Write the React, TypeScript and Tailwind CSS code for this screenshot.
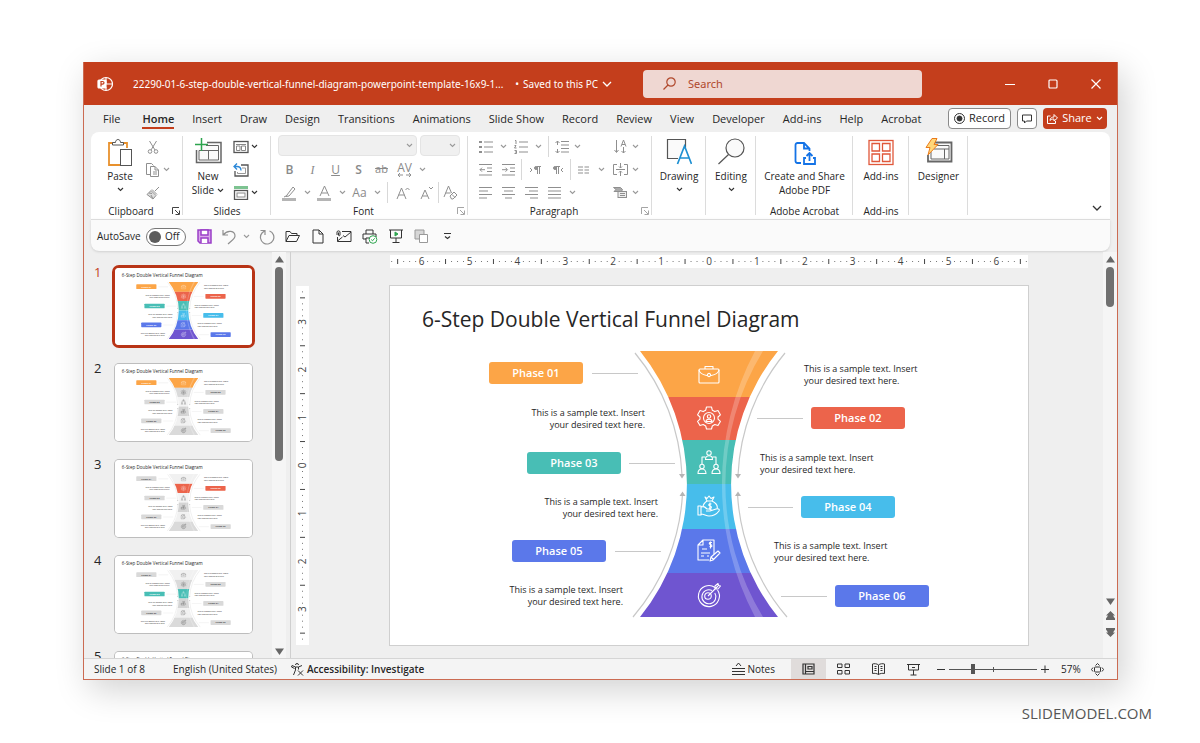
import React, { useId, useState } from 'react';

const TABS = [
    'File', 'Home', 'Insert', 'Draw', 'Design', 'Transitions', 'Animations', 'Slide Show',
    'Record', 'Review', 'View', 'Developer', 'Add-ins', 'Help', 'Acrobat',
];

const COLORS = ['#fca547', '#ec644b', '#48beb5', '#47bdeb', '#5b78ea', '#6f55d0'];
const GREYS = ['#f1f1f1', '#dadada', '#f4f4f4', '#d4d4d4', '#f1f1f1', '#dadada'];

// Diagram geometry, in slide units (638 x 359)
const BANDS = [
    { y: 65, h: 46 },
    { y: 111, h: 43 },
    { y: 154, h: 44 },
    { y: 198, h: 45 },
    { y: 243, h: 44 },
    { y: 287, h: 44 },
];

const PHASES = [
    { label: 'Phase 01', x: 99, y: 76, line: [202, 248], tx: 414, ty: 86, end: false, color: '#fca547' },
    { label: 'Phase 02', x: 421, y: 121, line: [367, 413], tx: 255, ty: 130, end: true, color: '#ec644b' },
    { label: 'Phase 03', x: 137, y: 166, line: [239, 285], tx: 370, ty: 175, end: false, color: '#48beb5' },
    { label: 'Phase 04', x: 411, y: 210, line: [358, 403], tx: 268, ty: 219, end: true, color: '#47bdeb' },
    { label: 'Phase 05', x: 122, y: 254, line: [225, 271], tx: 384, ty: 263, end: false, color: '#5b78ea' },
    { label: 'Phase 06', x: 445, y: 299, line: [391, 437], tx: 233, ty: 307, end: true, color: '#5b78ea' },
];

const PHASE_ICONS = [
    <g key="case">
        <rect x="-10" y="-6" width="20" height="14" rx="1" />
        <path d="M-4 -6v-2.500h8V-6M-10 -5C-9 -.5 -5 0 -2 .5M10 -5C9 -.5 5 0 2 .5" />
        <circle cx="0" cy="0" r="1.600" />
    </g>,
    <g key="gear">
        <path d="M-2.500 -11h5l.8 3.200 2.500 1.400 3.200 -1 2.400 4.200 -2.400 2.200v2.200l2.400 2.200 -2.400 4.200 -3.200 -1 -2.500 1.400 -.8 3h-5l-.8 -3 -2.500 -1.400 -3.200 1 -2.400 -4.200 2.400 -2.200v-2.200l-2.400 -2.200 2.400 -4.200 3.200 1 2.500 -1.400z" />
        <circle cx="0" cy="0" r="5.500" />
        <circle cx="0" cy="-1.500" r="1.700" />
        <path d="M-3 3.500C-3 .5 3 .5 3 3.500z" />
    </g>,
    <g key="team">
        <circle cx="0" cy="-9" r="2.200" />
        <path d="M-3.500 -2.500c0 -5 7 -5 7 0zM-3.500 -5H-7V2M3.500 -5H7V2" />
        <circle cx="-7" cy="4.500" r="2.200" />
        <circle cx="7" cy="4.500" r="2.200" />
        <path d="M-11 11.500c0 -6 8 -6 8 0zM3 11.500c0 -6 8 -6 8 0z" />
    </g>,
    <g key="money">
        <path d="M-11 -1h3v9h-3zM-8 0c3 -1 4 0 6 2h3c1.500 0 1.500 2 0 2h-4M1 4l6 -2c2 -.5 4 0 3 2C7 8 4 9 0 9c-3 0 -5 -2 -8 -2M-4 -10l2 1.500L0 -11l2 2.500L5 -10 3 -6h-5zM-2 -6c-3 2 -4 4 -4 6M3 -6c4 2 6 5 5 8" />
        <path d="M2.500 -3c-3 -1 -3.500 1.500 -1.500 2s2 3 -1 2M1 -4.500v7.500" />
    </g>,
    <g key="doc">
        <path d="M5 3V-11H-6l-5 5V9H0M-6 -11v5h-5M-7 -2h5M-8 2h9M-8 5h3M-2 5h2" />
        <path d="M1 10l1 -4 7 -6 2 2 -7 7zM2.500 6.500l2 2" />
        <path d="M3 -8.500c-3 -1 -3.500 1.500 -1.500 2s2 3 -1 2M1.500 -9.500v7" />
    </g>,
    <g key="target">
        <path d="M6 -7.500A10.500 10.500 0 1 0 8.500 -5" />
        <path d="M3 -4.500A7 7 0 1 0 5.800 -2" />
        <circle cx="-1" cy="1" r="3.300" />
        <path d="M-1 1L9 -9M6 -6l0 -3 3 -2.500 .5 2 2 .5 -2.500 3z" />
    </g>,
];

const ICON_Y = [89, 132, 176, 221, 265, 309];

const SlideArt = ({ active }: { active?: number }) => {
    const id = useId();
    const lit = (i: number) => active === undefined || active === i;

    return (
        <svg viewBox="0 0 638 359" className="block w-full bg-white" role="img" aria-label="6-Step Double Vertical Funnel Diagram">
            <text x="32" y="41" fontSize="21" fill="#262626">6-Step Double Vertical Funnel Diagram</text>
            <clipPath id={id}>
                <path d="M250 65A212 212 0 0 1 250 331H388A212 212 0 0 1 388 65z" />
            </clipPath>
            <g clipPath={`url(#${id})`}>
                {BANDS.map((b, i) => (
                    <rect key={i} x="240" y={b.y} width="160" height={b.h} fill={lit(i) ? COLORS[i] : GREYS[i]} />
                ))}
                <path d="M365 65A284 284 0 0 0 365 331H373A254 254 0 0 1 373 65z" fill="#fff" fillOpacity=".22" />
            </g>
            <g fill="none" stroke="#c8c8c8" strokeWidth="1.200">
                <path d="M245 67A206 206 0 0 1 292 189M243 331A206 206 0 0 0 292.500 208" />
                <path d="M395 67A206 206 0 0 0 348 189M397 331A206 206 0 0 1 347.500 208" />
            </g>
            <path d="M289 188h6l-3 4.500zM345 188h6l-3 4.500zM289.500 210h6l-3 -4.500zM345 210h6l-3 -4.500z" fill="#b5b5b5" />
            {PHASES.map((p, i) => (
                <g key={p.label}>
                    <rect x={p.x} y={p.y} width="94" height="22" rx="3" fill={lit(i) ? p.color : '#d9d9d9'} />
                    <text x={p.x + 47} y={p.y + 15} fontSize="11" fontWeight="600" textAnchor="middle" fill={lit(i) ? '#fff' : '#333'}>
                        {p.label}
                    </text>
                    <path d={`M${p.line[0]} ${p.y + 11.5}H${p.line[1]}`} stroke="#c8c8c8" />
                    <text x={p.tx} y={p.ty} fontSize="9" textAnchor={p.end ? 'end' : 'start'} fill="#262626">
                        This is a sample text. Insert
                    </text>
                    <text x={p.tx} y={p.ty + 12} fontSize="9" textAnchor={p.end ? 'end' : 'start'} fill="#262626">
                        your desired text here.
                    </text>
                    <g transform={`translate(319 ${ICON_Y[i]})`} fill="none" stroke={lit(i) ? '#fff' : '#555'} strokeWidth="1.100" strokeLinejoin="round">
                        {PHASE_ICONS[i]}
                    </g>
                </g>
            ))}
        </svg>
    );
};

const Ico = ({ w = 16, h = 16, color = '#8f8f8f', sw = 1, children }: {
    w?: number; h?: number; color?: string; sw?: number; children: React.ReactNode;
}) => (
    <svg width={w} height={h} viewBox={`0 0 ${w} ${h}`} fill="none" stroke={color} strokeWidth={sw} className="shrink-0" aria-hidden="true">
        {children}
    </svg>
);

const Chev = ({ color = '#9a9a9a' }: { color?: string }) => (
    <Ico w={7} h={5} color={color} sw={1.1}><path d="M1 1l2.500 2.500L6 1" /></Ico>
);

const Tool = ({ label, className = 'w-[23px]', children }: { label: string; className?: string; children: React.ReactNode }) => (
    <button type="button" aria-label={label} className={`flex h-[23px] shrink-0 items-center justify-center ${className}`}>
        {children}
    </button>
);

const Drop = ({ label, dark = false }: { label: string; dark?: boolean }) => (
    <Tool label={label} className="w-3"><Chev color={dark ? '#333' : '#9a9a9a'} /></Tool>
);

const Sep = ({ className = 'mx-px' }: { className?: string }) => <span className={`h-[21px] w-px bg-[#d8d8d8] ${className}`} />;

const Launcher = ({ dark = false }: { dark?: boolean }) => (
    <button type="button" aria-label="More options" className="absolute right-[3px] bottom-1">
        <Ico w={8} h={8} color={dark ? '#444' : '#a5a5a5'}><path d="M.5 7V.5H7M3 3l4 4M7.500 3.500v4h-4" /></Ico>
    </button>
);

const Group = ({ label, className, launcher, children }: {
    label: string; className: string; launcher?: 'dark' | 'light'; children: React.ReactNode;
}) => (
    <section aria-label={label || undefined} className={`relative flex shrink-0 flex-col pt-[3px] pb-px ${className}`}>
        <div className="flex h-[69px]">{children}</div>
        <div className={launcher ? 'h-[14px] pr-3 text-center leading-[14px]' : 'h-[14px] text-center leading-[14px]'}>{label}</div>
        {launcher && <Launcher dark={launcher === 'dark'} />}
        <span className="absolute right-0 top-1 bottom-1 w-px bg-[#dcdcdc]" />
    </section>
);

const BigButton = ({ icon, lines, chevron }: { icon: React.ReactNode; lines: string[]; chevron?: boolean }) => (
    <button type="button" className="flex w-full flex-col items-center pt-[3px] leading-[14px]">
        <span className="flex h-[31px] items-start justify-center">{icon}</span>
        {lines.map((l) => <span key={l} className="whitespace-nowrap">{l}</span>)}
        {chevron && <span className="flex h-3 items-center"><Chev color="#333" /></span>}
    </button>
);

const AlignIcon = ({ rows }: { rows: [number, number][] }) => (
    <Ico w={13} h={14}>
        {rows.map(([a, b], i) => <path key={i} d={`M${a} ${1.5 + i * 3.5}H${b}`} />)}
    </Ico>
);

const SlideGlyph = ({ children }: { children?: React.ReactNode }) => (
    <Ico w={16} h={14} color="#555">{children}</Ico>
);

const Ribbon = () => (
    <div className="flex h-[87px] overflow-hidden rounded-t-lg bg-white">
        <Group label="Clipboard" className="w-[92px]" launcher="dark">
            <div className="w-[54px] pl-1">
                <BigButton
                    lines={['Paste']}
                    chevron
                    icon={
                        <Ico w={26} h={29} color="#555">
                            <path d="M8 5H2v22h11" stroke="#e8912d" strokeWidth="1.800" />
                            <path d="M15 5h5v5" stroke="#e8912d" strokeWidth="1.800" />
                            <path d="M5.500 7V4.500h3c0-4 5-4 5 0h3V7z" fill="#fff" />
                            <rect x="13.500" y="11.500" width="11" height="16" fill="#fff" />
                        </Ico>
                    }
                />
            </div>
            <div>
                <Tool label="Cut" className="w-[15px]">
                    <Ico w={12} h={14}><path d="M2.500 1l5.500 9M9.500 1L4 10" /><circle cx="3" cy="11.500" r="1.800" /><circle cx="9" cy="11.500" r="1.800" /></Ico>
                </Tool>
                <div className="flex">
                    <Tool label="Copy" className="w-[15px]">
                        <Ico w={15} h={15}><path d="M5 12.500H1.500V1.500h5l2 2M5.500 4.500H10l3.500 3.500v6.500h-8zM10 4.500V8h3.500M8 10h4M8 12h4" /></Ico>
                    </Tool>
                    <Drop label="Copy options" />
                </div>
                <Tool label="Format painter" className="w-[15px]">
                    <Ico w={14} h={14}><path d="M13 1L9 5M6 3.500l5 5M5 4.500l5 5L7 13 1 8.500zM3 7l3 .5M5 9l1.500 3" fill="#ddd" /></Ico>
                </Tool>
            </div>
        </Group>

        <Group label="Slides" className="w-[88px]">
            <div className="w-[50px]">
                <button type="button" className="flex w-full flex-col items-center pt-[3px] leading-[14px]">
                    <span className="h-[31px]">
                        <Ico w={28} h={26} color="#666">
                            <path d="M13 4.500h14v20H2.500V12" fill="#fafafa" strokeWidth="1.500" />
                            <path d="M12 7.500h12.500v14.500H5V12.500h19.500M14.500 12.500v9" />
                            <path d="M7.500 0v13M1 6.500h13" stroke="#2da44e" strokeWidth="1.500" />
                        </Ico>
                    </span>
                    <span>New</span>
                    <span className="flex items-center gap-[3px]"><span>Slide</span><Chev color="#333" /></span>
                </button>
            </div>
            <div>
                <div className="flex">
                    <Tool label="Layout" className="w-[15px]">
                        <SlideGlyph><rect x="1" y="1.500" width="14" height="11" strokeWidth="1.300" /><path d="M3 4.500h10M3.500 6h3.500v4.500H3.500zM8.500 6H12.500v4.500H8.500z" stroke="#888" /></SlideGlyph>
                    </Tool>
                    <Drop label="Layout options" dark />
                </div>
                <Tool label="Reset" className="w-[15px]">
                    <SlideGlyph><path d="M8 2h7v11H2V8" strokeWidth="1.300" /><path d="M9 5h3.500v5.500H4.500V9" stroke="#999" /><path d="M4 .5L1 3.500l3 3M1 3.500h3c3 0 4 1.500 4 4" stroke="#2b88d8" strokeWidth="1.300" /></SlideGlyph>
                </Tool>
                <div className="flex">
                    <Tool label="Section" className="w-[15px]">
                        <SlideGlyph><path d="M1 1.500h14" stroke="#7dc391" strokeWidth="3" /><rect x="1.500" y="4.500" width="13" height="9" strokeWidth="1.300" /><rect x="4" y="7" width="8" height="4" stroke="#888" /></SlideGlyph>
                    </Tool>
                    <Drop label="Section options" dark />
                </div>
            </div>
        </Group>

        <Group label="Font" className="w-[197px]" launcher="light">
            <div className="flex flex-col pl-[7px] text-[#8a8a8a]">
                <div className="flex h-[23px] gap-[3px]">
                    <span className="relative block">
                        <select aria-label="Font name" className="block h-[21px] w-[139px] appearance-none rounded border border-[#e4e4e4] bg-[#f0f0f0]" />
                        <span className="pointer-events-none absolute right-1 top-2"><Chev /></span>
                    </span>
                    <span className="relative block">
                        <select aria-label="Font size" className="block h-[21px] w-[40px] appearance-none rounded border border-[#e4e4e4] bg-[#f0f0f0]" />
                        <span className="pointer-events-none absolute right-1 top-2"><Chev /></span>
                    </span>
                </div>
                <div className="flex text-xs">
                    <Tool label="Bold"><span className="font-semibold">B</span></Tool>
                    <Tool label="Italic"><i className="font-['Liberation_Serif',serif]">I</i></Tool>
                    <Tool label="Underline"><u>U</u></Tool>
                    <Tool label="Shadow"><span className="font-semibold">S</span></Tool>
                    <Tool label="Strikethrough"><s className="text-[11px]">ab</s></Tool>
                    <Tool label="Character spacing">
                        <span className="flex flex-col items-center leading-[10px]">AV<Ico w={15} h={4}><path d="M3 0L1 2l2 2M1 2h5M9 2h5M12 0l2 2-2 2" /></Ico></span>
                    </Tool>
                    <Drop label="Character spacing options" />
                </div>
                <div className="flex items-center text-xs">
                    <Tool label="Highlight">
                        <Ico w={15} h={16}><path d="M5 10L11 2l2 2-6 7-3 .5zM4 11l-2 1" /><path d="M0 14.500h14" stroke="#b5b5b5" strokeWidth="3" /></Ico>
                    </Tool>
                    <Drop label="Highlight color" />
                    <Tool label="Font color">
                        <Ico w={15} h={16}><path d="M3 11L7.500 1 12 11M4.500 8h6" /><path d="M0 14.500h14" stroke="#b5b5b5" strokeWidth="3" /></Ico>
                    </Tool>
                    <Drop label="Font colors" />
                    <Tool label="Change case">Aa</Tool>
                    <Drop label="Change case options" />
                    <Sep className="mx-1" />
                    <Tool label="Increase font size"><Ico w={15} h={14}><path d="M1 13L5.500 2 10 13M2.500 9h6M9.500 4l2-2 2 2" /></Ico></Tool>
                    <Tool label="Decrease font size"><Ico w={15} h={14}><path d="M2 13l4-9 4 9M3.500 10h5M10 1l2 2 2-2" /></Ico></Tool>
                    <Sep className="" />
                    <Tool label="Clear formatting"><Ico w={15} h={15}><path d="M1 12L5.500 1l3 7M2.500 8h5M7 11l4-4 3 3-4 4H8.500zM9 9.500l3 3" /></Ico></Tool>
                </div>
            </div>
        </Group>

        <Group label="Paragraph" className="w-[184px]" launcher="light">
            <div className="flex flex-1 justify-between pl-1.5 pr-[11px]">
                <div>
                    <div className="flex items-center">
                        <Tool label="Bullets"><Ico w={14} h={14}><path d="M0 2h3M0 7h3M0 12h3" strokeWidth="2" /><path d="M5 2h9M5 7h9M5 12h9" /></Ico></Tool>
                        <Drop label="Bullet styles" />
                        <Tool label="Numbering"><Ico w={14} h={14}><path d="M1 .5h1V4M.5 5.500H2L.5 8H2.500M.5 10.500h2v3h-2M1 12h1M5 2h9M5 7h9M5 12h9" /></Ico></Tool>
                        <Drop label="Numbering styles" />
                        <Sep className="mx-1" />
                        <Tool label="Line spacing" className="w-[18px]"><Ico w={14} h={14}><path d="M2.500 5V1M.5 3l2-2 2 2M2.500 9v4M.5 11l2 2 2-2M6 1.500h8M6 5h8M6 8.500h8M6 12h8" /></Ico></Tool>
                        <Drop label="Line spacing options" />
                    </div>
                    <div className="flex items-center">
                        <Tool label="Decrease indent"><Ico w={13} h={14}><path d="M0 1.500h13M8 5h5M8 8.500h5M0 12h13M6 6.700H1M3 4.700l-2 2 2 2" /></Ico></Tool>
                        <Tool label="Increase indent"><Ico w={13} h={14}><path d="M0 1.500h13M8 5h5M8 8.500h5M0 12h13M0 6.700h5M3.500 4.700l2 2-2 2" /></Ico></Tool>
                        <Sep />
                        <Tool label="Left to right"><Ico w={12} h={10}><path d="M1 3l2 2-2 2M8.500 9V1.500M10.500 9V1.500M12 1.500H8" /><circle cx="7" cy="3" r="1.500" fill="#8f8f8f" /></Ico></Tool>
                        <Tool label="Right to left"><Ico w={12} h={10}><path d="M11 3L9 5l2 2M4.500 9V1.500M6.500 9V1.500M8 1.500H4" /><circle cx="3" cy="3" r="1.500" fill="#8f8f8f" /></Ico></Tool>
                        <Sep />
                        <Tool label="Columns"><Ico w={11} h={8}><path d="M0 1h5M0 4h5M0 7h5M6.500 1h5M6.500 4h5M6.500 7h5" /></Ico></Tool>
                        <Drop label="Column options" />
                    </div>
                    <div className="flex items-center">
                        <Tool label="Align left"><AlignIcon rows={[[0, 13], [0, 9], [0, 13], [0, 8]]} /></Tool>
                        <Tool label="Center"><AlignIcon rows={[[0, 13], [2, 11], [0, 13], [3, 10]]} /></Tool>
                        <Tool label="Align right"><AlignIcon rows={[[0, 13], [4, 13], [0, 13], [5, 13]]} /></Tool>
                        <Tool label="Justify"><AlignIcon rows={[[0, 13], [0, 13], [0, 13], [0, 13]]} /></Tool>
                        <Drop label="Justify options" />
                    </div>
                </div>
                <div>
                    <div className="flex">
                        <Tool label="Text direction" className="w-[18px]"><Ico w={13} h={14}><path d="M2.500 0v12M.5 10l2 2.500L4.500 10M9.500 7v6M7.500 11l2 2 2-2M7 6.500L9.500 0 12 6.500M8 4.500h3" /></Ico></Tool>
                        <Drop label="Text direction options" />
                    </div>
                    <div className="flex">
                        <Tool label="Align text" className="w-[18px]"><Ico w={15} h={13}><path d="M4 1.500H.5v10H4M11 1.500h3.500v10H11M3 6.500h9M7.500 0v5M6 3.500L7.500 5 9 3.500M7.500 13V8M6 9.500L7.500 8 9 9.500" /></Ico></Tool>
                        <Drop label="Align text options" />
                    </div>
                    <div className="flex">
                        <Tool label="Convert to SmartArt" className="w-[18px]"><Ico w={15} h={13}><path d="M.5 1.500h7l2 2-1 2H1l2-2z" fill="#aaa" /><rect x="5" y="5.500" width="8.500" height="6" fill="#eee" /><path d="M7 7.500h5M7 9.500h5" /></Ico></Tool>
                        <Drop label="SmartArt options" />
                    </div>
                </div>
            </div>
        </Group>

        <Group label="" className="w-[54px]">
            <BigButton lines={['Drawing']} chevron icon={
                <Ico w={26} h={27} color="#555">
                    <path d="M12 20.500H1.500V1.500h18V10" fill="#fafafa" strokeWidth="1.200" />
                    <path d="M11.500 26L18.500 8l7 18M14 20h9" stroke="#1e90d2" strokeWidth="1.700" />
                </Ico>
            } />
        </Group>
        <Group label="" className="w-[50px]">
            <BigButton lines={['Editing']} chevron icon={
                <Ico w={27} h={27} color="#555" sw={1.200}><circle cx="17" cy="10" r="9" fill="#fafafa" /><path d="M10.500 16.500L.5 26" /></Ico>
            } />
        </Group>
        <Group label="Adobe Acrobat" className="w-[97px]">
            <BigButton lines={['Create and Share', 'Adobe PDF']} icon={
                <Ico w={22} h={29} color="#1473e6" sw={1.800}>
                    <path d="M7 25H3.500c-1.500 0-2-1-2-2V7c0-1.500 1-2 2-2H10l5.500 5.500V13M10 5v5.500h5.500" />
                    <path d="M12 20h-2v6h11v-6h-2M15.500 23v-8M12.500 18l3-3 3 3" />
                </Ico>
            } />
        </Group>
        <Group label="Add-ins" className="w-[56px]">
            <BigButton lines={['Add-ins']} icon={
                <Ico w={26} h={28} color="#e0573a" sw={1.300}>
                    <rect x="1" y="2.500" width="24" height="24" />
                    <path d="M4 5.500h7.500v7.500H4zM14.500 5.500H22v7.500h-7.500zM4 16h7.500v7.500H4zM14.500 16H22v7.500h-7.500z" />
                </Ico>
            } />
        </Group>
        <Group label="" className="w-[59px]">
            <BigButton lines={['Designer']} icon={
                <Ico w={28} h={25} color="#666">
                    <path d="M10 4.500h16.500v19H3V17" fill="#fafafa" strokeWidth="1.800" />
                    <path d="M9 11h15M19.500 11v10M6 21V14M10 7.500h14V21H6" />
                    <path d="M7 .5h5L9 6.500h4L3 17l2-7.500H1z" fill="#ffd77a" stroke="#ea7a1a" />
                </Ico>
            } />
        </Group>
        <div className="flex flex-1 items-end justify-end pr-2 pb-[7px]">
            <button type="button" aria-label="Ribbon options">
                <Ico w={10} h={7} color="#333" sw={1.300}><path d="M1 1l4 4 4-4" /></Ico>
            </button>
        </div>
    </div>
);

const QuickAccess = () => {
    const [autoSave, setAutoSave] = useState(false);

    return (
        <div className="flex h-[32px] items-center rounded-b-lg border-t border-[#dcdcdc] bg-[#fafafa] pt-0.5 pl-1.5 shadow-sm">
            <label htmlFor="autosave" className="w-[43px]">AutoSave</label>
            <span className="relative mr-[7px] ml-1.5 block h-[18px] w-10">
                <input
                    id="autosave"
                    type="checkbox"
                    role="switch"
                    checked={autoSave}
                    onChange={(e) => setAutoSave(e.target.checked)}
                    className="block h-full w-full appearance-none rounded-full border border-[#777] bg-white"
                />
                <span className="pointer-events-none absolute inset-0 flex items-center gap-1 pl-[3px]">
                    <span className="h-3 w-3 rounded-full bg-[#5c5c5c]" />
                    {autoSave ? 'On' : 'Off'}
                </span>
            </span>
            <Tool label="Save" className="w-[22px]">
                <Ico w={15} h={15} color="#9a3fc8" sw={1.500}>
                    <path d="M1 1h13v13H3l-2-2z" fill="#d9a6ea" /><path d="M4 1v5h7V1z" fill="#fff" /><path d="M4 14V9h7v5" fill="#fff" />
                </Ico>
            </Tool>
            <Tool label="Undo" className="w-[28px]"><Ico w={14} h={16}><path d="M1 1v5h5M1 6c5-6 12-4 12 1 0 3-4 5-7 8" strokeWidth="1.200" /></Ico></Tool>
            <Tool label="Undo list" className="w-1.5"><Chev /></Tool>
            <Tool label="Redo" className="ml-1 w-[27px]"><Ico w={16} h={16}><path d="M1.500 1.500h4.500v4.500M10.500 2a6.700 6.700 0 1 1-7.500 2l3-2.500" strokeWidth="1.200" /></Ico></Tool>
            <Tool label="Open" className="w-[25px]"><Ico w={15} h={13} color="#333"><path d="M1 11.500V1.500h4l1.500 2H12v2M1 11.500l3-6h10.500l-3 6z" /></Ico></Tool>
            <Tool label="New" className="w-[26px]"><Ico w={12} h={15} color="#333"><path d="M1 1h6l4 4v9H1zM7 1v4h4" /></Ico></Tool>
            <Tool label="Email" className="w-[26px]"><Ico w={16} h={13} color="#333"><path d="M6 1.500h9v10H1.500V7M15 2L9 7 7 5.500M1.500 11l5-4" /><path d="M1 5V2c0-1.500 3-1.500 3 0v3c0 1-1.500 1-1.500 0V2.500" /></Ico></Tool>
            <Tool label="Quick print" className="w-[26px]">
                <Ico w={16} h={15} color="#333"><path d="M4 5V1h7v4M4 10H1V5h13v3M4 14V9h4M4 14h3" /><circle cx="11" cy="10.500" r="3.800" fill="#fff" stroke="#2da44e" /><path d="M9.200 10.500l1.300 1.300 2.200-2.500" stroke="#2da44e" /></Ico>
            </Tool>
            <Tool label="Start slide show" className="w-[25px]"><Ico w={14} h={15} color="#333"><path d="M0 1h14M1.500 1v8h11V1M7 9v4.500M3.500 13.500h7" /><path d="M6 3l3 2-3 2z" fill="#2da44e" stroke="#2da44e" /></Ico></Tool>
            <Tool label="Duplicate" className="w-[26px]"><Ico w={15} h={15} color="#999"><path d="M1 1h9v9H1z" fill="#d6d6d6" /><path d="M5.500 5.500h8v8h-8z" fill="#fff" /></Ico></Tool>
            <Tool label="Customize toolbar" className="w-[26px]"><Ico w={7} h={7} color="#333" sw={1.200}><path d="M0 .5h7M1 3.500l2.500 2L6 3.500" /></Ico></Tool>
        </div>
    );
};

const TitleBar = () => (
    <header className="flex h-[43px] shrink-0 items-center bg-[#c43e1c] font-['Noto_Sans',sans-serif] text-white">
        <span className="mr-5 ml-[13px]">
            <Ico w={16} h={16} color="#fff" sw={1.200}>
                <circle cx="9" cy="8" r="6.500" /><path d="M9 1.500V8h6.500M9 14.500V11" /><rect x="1" y="4" width="8" height="8" rx="1" fill="#fff" />
                <path d="M4 10.500v-5h1.500c2 0 2 2.600 0 2.600H4" stroke="#c43e1c" />
            </Ico>
        </span>
        <span className="pt-0.5 whitespace-nowrap">22290-01-6-step-double-vertical-funnel-diagram-powerpoint-template-16x9-1...</span>
        <button type="button" className="ml-3 flex items-center gap-1 pt-0.5 whitespace-nowrap">
            <span>•</span>
            <span>Saved to this PC</span>
            <Ico w={10} h={7} color="#fff" sw={1.300}><path d="M1 1l4 4 4-4" /></Ico>
        </button>
        <label className="ml-auto flex h-7 w-[279px] shrink-0 items-center gap-3 rounded-sm bg-[#efd7d2] px-5">
            <Ico w={13} h={13} color="#b0482c" sw={1.200}><circle cx="8" cy="5" r="4.200" /><path d="M5 8L.5 12.500" /></Ico>
            <input type="search" placeholder="Search" aria-label="Search" className="w-full bg-transparent pt-0.5 text-[11px] text-[#a83a1e] outline-none placeholder:text-[#b0482c]" />
        </label>
        <div className="ml-[67px] flex shrink-0">
            <button type="button" aria-label="Minimize" className="flex w-[42px] justify-center"><Ico w={10} h={10} color="#fff"><path d="M0 5.500h10" /></Ico></button>
            <button type="button" aria-label="Maximize" className="flex w-[43px] justify-center"><Ico w={10} h={10} color="#fff" sw={1.200}><rect x="1" y="1" width="8" height="8" rx="1" /></Ico></button>
            <button type="button" aria-label="Close" className="flex w-[43px] justify-center"><Ico w={10} h={10} color="#fff" sw={1.200}><path d="M.5 .5l9 9M9.500 .5l-9 9" /></Ico></button>
        </div>
    </header>
);

const TabRow = () => (
    <nav className="flex h-[27px] shrink-0 items-center pr-2.5 pl-[19px] text-[11px]">
        <div className="flex items-center gap-[18px] pt-0.5">
            {TABS.map((t) => (
                <a
                    key={t}
                    href={`#${t}`}
                    className={t === 'Home' ? 'ml-1 border-b-2 border-[#c43e1c] font-semibold whitespace-nowrap leading-[17px]' : 'border-b-2 border-transparent whitespace-nowrap leading-[17px]'}
                >
                    {t}
                </a>
            ))}
        </div>
        <div className="ml-auto flex shrink-0 gap-1.5">
            <button type="button" className="flex h-[21px] w-[63px] items-center justify-center gap-1 rounded border border-[#8a8a8a] bg-white">
                <Ico w={11} h={11} color="#333"><circle cx="5.500" cy="5.500" r="5" /><circle cx="5.500" cy="5.500" r="2.500" fill="#333" /></Ico>
                Record
            </button>
            <button type="button" aria-label="Comments" className="flex h-[21px] w-5 items-center justify-center rounded border border-[#8a8a8a] bg-white">
                <Ico w={10} h={10} color="#333"><path d="M.5 1h9v6H4.500l-2 2V7h-2z" /></Ico>
            </button>
            <button type="button" className="flex h-[21px] w-[64px] items-center justify-center gap-1 rounded bg-[#c43e1c] text-white">
                <Ico w={11} h={11} color="#fff"><path d="M3.500 3H.5v7.500h8V8M3 7.500C3 5 5 4 7 4V1.500L10.500 5 7 8V6C5 6 4 6.500 3 7.500z" /></Ico>
                Share
                <Chev color="#fff" />
            </button>
        </div>
    </nav>
);

const Scrollbar = ({ short }: { short?: boolean }) => (
    <div className="flex w-[14px] shrink-0 flex-col items-center bg-[#f5f5f5] pt-1 pb-[3px]">
        <Ico w={9} h={7} color="none"><path d="M4.500 0L9 6.500H0z" fill="#666" /></Ico>
        <div className={short ? 'mt-1 h-10 w-2 rounded bg-[#707070]' : 'mt-1 h-[194px] w-2 rounded bg-[#707070]'} />
        <div className="flex-1" />
        {short ? (
            <div className="flex flex-col items-center gap-1.5 pb-[18px]">
                <Ico w={9} h={7} color="none"><path d="M0 .5h9L4.500 7z" fill="#666" /></Ico>
                <Ico w={9} h={10} color="none"><path d="M4.500 0L9 4.500H7L9 7.500V9H0V7.500l2-3H0z" fill="#666" /></Ico>
                <Ico w={9} h={10} color="none"><path d="M4.500 10L9 5.500H7L9 2.500V1H0v1.500l2 3H0z" fill="#666" /></Ico>
            </div>
        ) : (
            <Ico w={9} h={7} color="none"><path d="M0 .5h9L4.500 7z" fill="#666" /></Ico>
        )}
    </div>
);

// One inch is 47.9 units; a dot every eighth, a dash every half
const rulerMarks = (length: number, inches: number) => {
    const marks: { pos: number; kind: 'num' | 'dash' | 'dot'; n: number }[] = [];
    const mid = length / 2;
    for (let i = -inches * 8; i <= inches * 8; i++) {
        const pos = mid + (i * 47.9) / 8;
        if (pos < 1 || pos > length - 1) continue;
        marks.push({ pos, kind: i % 8 === 0 ? 'num' : i % 4 === 0 ? 'dash' : 'dot', n: Math.abs(i / 8) });
    }
    return marks;
};

const HRuler = () => (
    <svg viewBox="0 0 638 13" className="block w-full bg-white" aria-label="Horizontal ruler">
        {rulerMarks(638, 7).map((m) =>
            m.kind === 'num' ? (
                <text key={m.pos} x={m.pos} y="10" fontSize="10" textAnchor="middle" fill="#444">{m.n}</text>
            ) : m.kind === 'dash' ? (
                <path key={m.pos} d={`M${m.pos} 4v5`} stroke="#444" />
            ) : (
                <rect key={m.pos} x={m.pos - 0.5} y="6" width="1" height="1" fill="#777" />
            )
        )}
    </svg>
);

const VRuler = () => (
    <svg viewBox="0 0 13 359" className="block h-full w-full bg-white" aria-label="Vertical ruler">
        {rulerMarks(359, 4).map((m) =>
            m.kind === 'num' ? (
                <text key={m.pos} transform={`translate(10 ${m.pos}) rotate(-90)`} fontSize="10" textAnchor="middle" fill="#444">{m.n}</text>
            ) : m.kind === 'dash' ? (
                <path key={m.pos} d={`M4 ${m.pos}h5`} stroke="#444" />
            ) : (
                <rect key={m.pos} x="6" y={m.pos - 0.5} width="1" height="1" fill="#777" />
            )
        )}
    </svg>
);

const StatusBar = () => {
    const [zoom, setZoom] = useState(26);

    return (
        <footer className="flex h-[21px] shrink-0 items-center border-t border-[#d5d5d5] bg-[#f4f4f4] pr-[13px] pl-2.5">
            <span className="w-[79px] whitespace-nowrap">Slide 1 of 8</span>
            <button type="button" className="w-[104px] text-left whitespace-nowrap">English (United States)</button>
            <button type="button" className="ml-3.5 flex items-center gap-[3px] whitespace-nowrap font-semibold">
                <Ico w={13} h={13} color="#333"><path d="M1 2.500l3.500 1.500h3L11 2.500M4.500 4v3L2.500 12M7.500 4v2.500M4.500 2a1.500 1.500 0 0 1 3 0M1 2.500L.5 4 3.500 5.500M7 7.500l5 5M12 7.500l-5 5" /></Ico>
                Accessibility: Investigate
            </button>
            <button type="button" className="mr-4 ml-auto flex items-center gap-0.5">
                <Ico w={15} h={14} color="#333"><path d="M5 4l2.500-3L10 4M1 6.500h13M1 9.500h13M1 12.500h13" /></Ico>
                Notes
            </button>
            <button type="button" aria-label="Normal view" className="flex h-5 w-[35px] items-center justify-center bg-[#e0dcdb]">
                <Ico w={13} h={12} color="#333" sw={1.200}><path d="M1 1h11v10H1zM3.500 1v10M3.500 8.500H12" /><path d="M6 3.500h4v2.500H6z" /></Ico>
            </button>
            <button type="button" aria-label="Slide sorter" className="flex w-[35px] justify-center">
                <Ico w={13} h={12} color="#333"><path d="M.5 1h4.500v3.500H.5zM8 1h4.500v3.500H8zM.5 7.500h4.500V11H.5zM8 7.500h4.500V11H8z" /></Ico>
            </button>
            <button type="button" aria-label="Reading view" className="flex w-[35px] justify-center">
                <Ico w={13} h={12} color="#333"><path d="M6.500 2C5 .5 2 .5 .5 1v9.500c2-.5 4.500 0 6 1 1.500-1 4-1.500 6-1V1c-1.500-.5-4.500-.5-6 1zM6.500 2v9.500M2.500 3.500h2M2.500 5.500h2M2.500 7.500h2M8.500 3.500h2M8.500 5.500h2M8.500 7.500h2" /></Ico>
            </button>
            <button type="button" aria-label="Slide show" className="flex w-[35px] justify-center">
                <Ico w={13} h={13} color="#333"><path d="M0 1.500h13M1.500 1.500v5.500h10V1.500M6.500 7v5M3.500 12h6M5 4.500h3" /></Ico>
            </button>
            <button type="button" aria-label="Zoom out" className="mr-1 ml-1.5"><Ico w={8} h={8} color="#333"><path d="M0 4.500h8" /></Ico></button>
            <span className="relative flex h-3 w-[88px] items-center">
                <span className="absolute inset-x-0 top-1.5 h-px bg-[#555]" />
                <span className="absolute top-1 left-1/2 h-[5px] w-px bg-[#555]" />
                <input
                    type="range"
                    aria-label="Zoom"
                    value={zoom}
                    onChange={(e) => setZoom(Number(e.target.value))}
                    className="relative h-3 w-full appearance-none bg-transparent [&::-webkit-slider-thumb]:h-2.5 [&::-webkit-slider-thumb]:w-1 [&::-webkit-slider-thumb]:appearance-none [&::-webkit-slider-thumb]:bg-[#555]"
                />
            </span>
            <button type="button" aria-label="Zoom in" className="mr-3 ml-1"><Ico w={8} h={8} color="#333"><path d="M0 4.500h8M4 .5v8" /></Ico></button>
            <span className="w-[30px]">57%</span>
            <button type="button" aria-label="Fit to window">
                <Ico w={13} h={13} color="#333"><rect x="3.500" y="4" width="6" height="5" rx="1" /><path d="M4.500 2.500l2-2 2 2M4.500 10.500l2 2 2-2M2 4.500l-1.500 2 1.500 2M11 4.500l1.500 2-1.500 2" /></Ico>
            </button>
        </footer>
    );
};

const App = () => {
    const [selected, setSelected] = useState(0);

    return (
        <div className="flex h-screen flex-col bg-white pt-[62px] font-['Open_Sans',sans-serif] text-[10px] text-[#262626]">
            <div className="mr-[82px] ml-[83px] flex min-h-0 flex-1 flex-col border border-t-0 border-[#cb6b52] bg-[#efefef] shadow-[6px_10px_32px_rgba(0,0,0,0.18)]">
                <TitleBar />
                <TabRow />
                <div className="mx-[7px] shrink-0">
                    <Ribbon />
                    <QuickAccess />
                </div>
                <div className="flex min-h-0 flex-1 pt-px">
                    <aside className="flex w-[206px] shrink-0 justify-between overflow-hidden">
                        <ol className="flex flex-col gap-[19px] pt-4">
                            {[undefined, 0, 1, 2, 3].map((active, i) => (
                                <li key={i} className="flex items-start">
                                    <span className={selected === i ? 'w-[31px] pl-2.5 text-[13px] leading-2 text-[#c43e1c]' : 'w-[31px] pl-2.5 text-[13px] leading-2'}>
                                        {i + 1}
                                    </span>
                                    <button
                                        type="button"
                                        aria-label={`Slide ${i + 1}`}
                                        onClick={() => setSelected(i)}
                                        className={
                                            selected === i
                                                ? 'w-[137px] overflow-hidden rounded ring-3 ring-[#b83416]'
                                                : 'w-[137px] overflow-hidden rounded ring-1 ring-[#bdbdbd]'
                                        }
                                    >
                                        <SlideArt active={active} />
                                    </button>
                                </li>
                            ))}
                        </ol>
                        <div className="mr-1 flex"><Scrollbar /></div>
                    </aside>
                    <main className="flex min-w-0 flex-1 border-l border-[#cfcfcf]">
                        <div className="grid min-w-0 flex-1 content-start grid-cols-[13px_minmax(0,1fr)] gap-x-[81px] gap-y-[18px] pt-[3px] pr-[75px] pl-[5px]">
                            <span />
                            <HRuler />
                            <VRuler />
                            <div className="outline outline-[#cfcfcf]">
                                <SlideArt />
                            </div>
                        </div>
                        <Scrollbar short />
                    </main>
                </div>
                <StatusBar />
            </div>
            <div className="flex h-[63px] shrink-0 items-center justify-end pt-1 pr-12 text-[15px] text-[#555]">
                <p>SLIDEMODEL.COM</p>
            </div>
        </div>
    );
};

export default App;
